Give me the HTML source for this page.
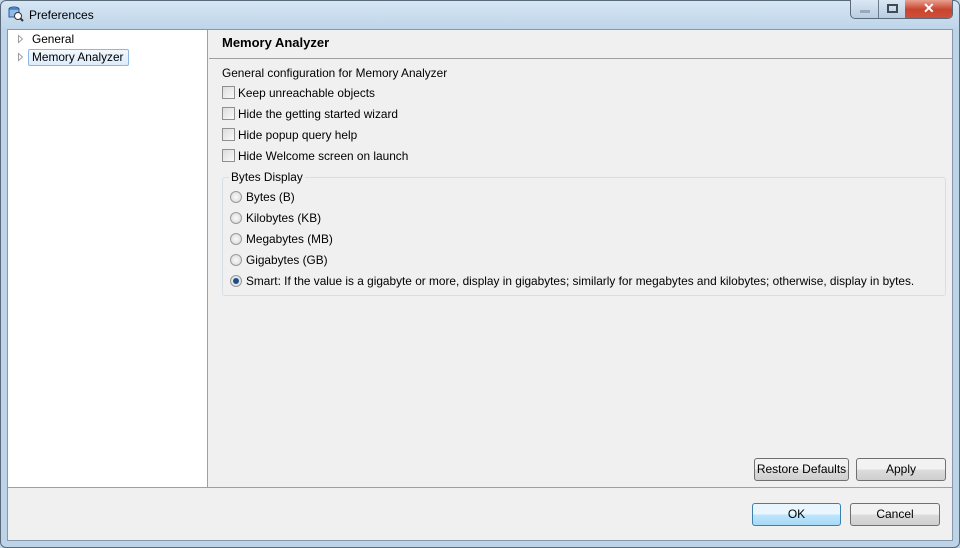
<!DOCTYPE html>
<html><head><style>
*{box-sizing:border-box;margin:0;padding:0}
body{width:960px;height:548px;overflow:hidden;background:#c4d8ea;font-family:"Liberation Sans",sans-serif;font-size:12px;color:#000;position:relative}
.tb{position:absolute;left:0;top:0;width:960px;height:548px;border:1px solid #5a6a7a;border-radius:6px;background:linear-gradient(#d6e6f4,#bcd3e8 30px,#bcd3e8)}
.abs{position:absolute}
.t{font-size:11.85px}
.title{left:29px;top:8px;font-size:12px}
.client{left:7px;top:29px;width:946px;height:512px;background:#f0f0f0;border:1px solid #8798aa}
.tree{left:8px;top:30px;width:200px;height:457px;background:#fff;border-right:1px solid #a0a0a0}
.cb{position:absolute;width:13px;height:13px;border:1px solid #8e8f8f;background:linear-gradient(135deg,#dcdcdc,#fafafa)}
.rb{position:absolute;width:12px;height:12px;border-radius:50%;border:1px solid #9a9a9a;background:radial-gradient(#fafafa,#d6d6d6)}
.btn{position:absolute;border:1px solid #707070;border-radius:3px;background:linear-gradient(#f2f2f2 50%,#dcdcdc 50%,#cfcfcf);text-align:center;font-size:12px;line-height:20px}
</style></head><body>
<div class="tb"></div>
<svg class="abs" style="left:7px;top:5px" width="18" height="18"><ellipse cx="7" cy="4" rx="5" ry="2" fill="#6fa8dc" stroke="#2a5a9a"/><rect x="2" y="4" width="10" height="8" fill="#8fbbe6" stroke="#2a5a9a"/><circle cx="11" cy="11" r="3.5" fill="#fff" stroke="#333"/><line x1="13.5" y1="13.5" x2="16" y2="16" stroke="#333" stroke-width="2"/></svg>
<div class="abs title">Preferences</div>
<div class="abs" style="left:850px;top:0;width:103px;height:19px;border:1px solid #5a6a7a;border-top:none;border-radius:0 0 5px 5px;background:linear-gradient(#dbe7f3,#b9cde2);overflow:hidden">
<div class="abs" style="left:27px;top:0;width:1px;height:19px;background:#6a7a8a"></div>
<div class="abs" style="left:54px;top:0;width:48px;height:19px;background:linear-gradient(#e8a090,#c8452e 50%,#d0503a)"></div>
<div class="abs" style="left:9px;top:10px;width:10px;height:3px;background:#9aa8b8"></div>
<div class="abs" style="left:36px;top:4px;width:11px;height:9px;border:2px solid #404a55"></div>
<div class="abs" style="left:72px;top:0px;color:#fff;font-weight:bold;font-size:14px">✕</div>
</div>
<div class="abs client"></div>
<div class="abs tree"></div>
<svg class="abs" style="left:17px;top:34px" width="8" height="30"><path d="M1.5 1.5 L5.5 5 L1.5 8.5 Z" fill="#fff" stroke="#a0a0a0"/><path d="M1.5 19.5 L5.5 23 L1.5 26.5 Z" fill="#fff" stroke="#a0a0a0"/></svg>
<div class="abs t" style="left:32px;top:32px">General</div>
<div class="abs" style="left:28px;top:49px;width:101px;height:17px;border:1px solid #8fb6de;border-radius:2px;background:linear-gradient(#f2f8fd,#dcebfb)"></div>
<div class="abs t" style="left:32px;top:50px">Memory Analyzer</div>
<div class="abs" style="left:222px;top:35px;font-weight:bold;font-size:13px">Memory Analyzer</div>
<div class="abs" style="left:209px;top:58px;width:743px;height:1px;background:#a0a0a0"></div>
<div class="abs t" style="left:222px;top:66px">General configuration for Memory Analyzer</div>
<div class="cb" style="left:222px;top:86px"></div><div class="abs t" style="left:238px;top:86px">Keep unreachable objects</div>
<div class="cb" style="left:222px;top:107px"></div><div class="abs t" style="left:238px;top:107px">Hide the getting started wizard</div>
<div class="cb" style="left:222px;top:128px"></div><div class="abs t" style="left:238px;top:128px">Hide popup query help</div>
<div class="cb" style="left:222px;top:149px"></div><div class="abs t" style="left:238px;top:149px">Hide Welcome screen on launch</div>
<div class="abs" style="left:222px;top:177px;width:724px;height:119px;border:1px solid #d5dfe5;border-radius:3px"></div>
<div class="abs t" style="left:229px;top:170px;background:#f0f0f0;padding:0 2px">Bytes Display</div>
<div class="rb" style="left:230px;top:191px"></div><div class="abs t" style="left:246px;top:190px">Bytes (B)</div>
<div class="rb" style="left:230px;top:212px"></div><div class="abs t" style="left:246px;top:211px">Kilobytes (KB)</div>
<div class="rb" style="left:230px;top:233px"></div><div class="abs t" style="left:246px;top:232px">Megabytes (MB)</div>
<div class="rb" style="left:230px;top:254px"></div><div class="abs t" style="left:246px;top:253px">Gigabytes (GB)</div>
<div class="rb" style="left:230px;top:275px"><div class="abs" style="left:2px;top:2px;width:6px;height:6px;border-radius:50%;background:#1c4f8a"></div></div><div class="abs t" style="left:246px;top:274px">Smart: If the value is a gigabyte or more, display in gigabytes; similarly for megabytes and kilobytes; otherwise, display in bytes.</div>
<div class="btn" style="left:754px;top:458px;width:95px;height:23px">Restore Defaults</div>
<div class="btn" style="left:856px;top:458px;width:90px;height:23px">Apply</div>
<div class="abs" style="left:8px;top:487px;width:944px;height:1px;background:#a0a0a0"></div>
<div class="btn" style="left:752px;top:503px;width:89px;height:23px;border-color:#3c7fb1;background:linear-gradient(#eaf6fd 50%,#bee6fd 50%,#a7d9f5)">OK</div>
<div class="btn" style="left:850px;top:503px;width:90px;height:23px">Cancel</div>
</body></html>
